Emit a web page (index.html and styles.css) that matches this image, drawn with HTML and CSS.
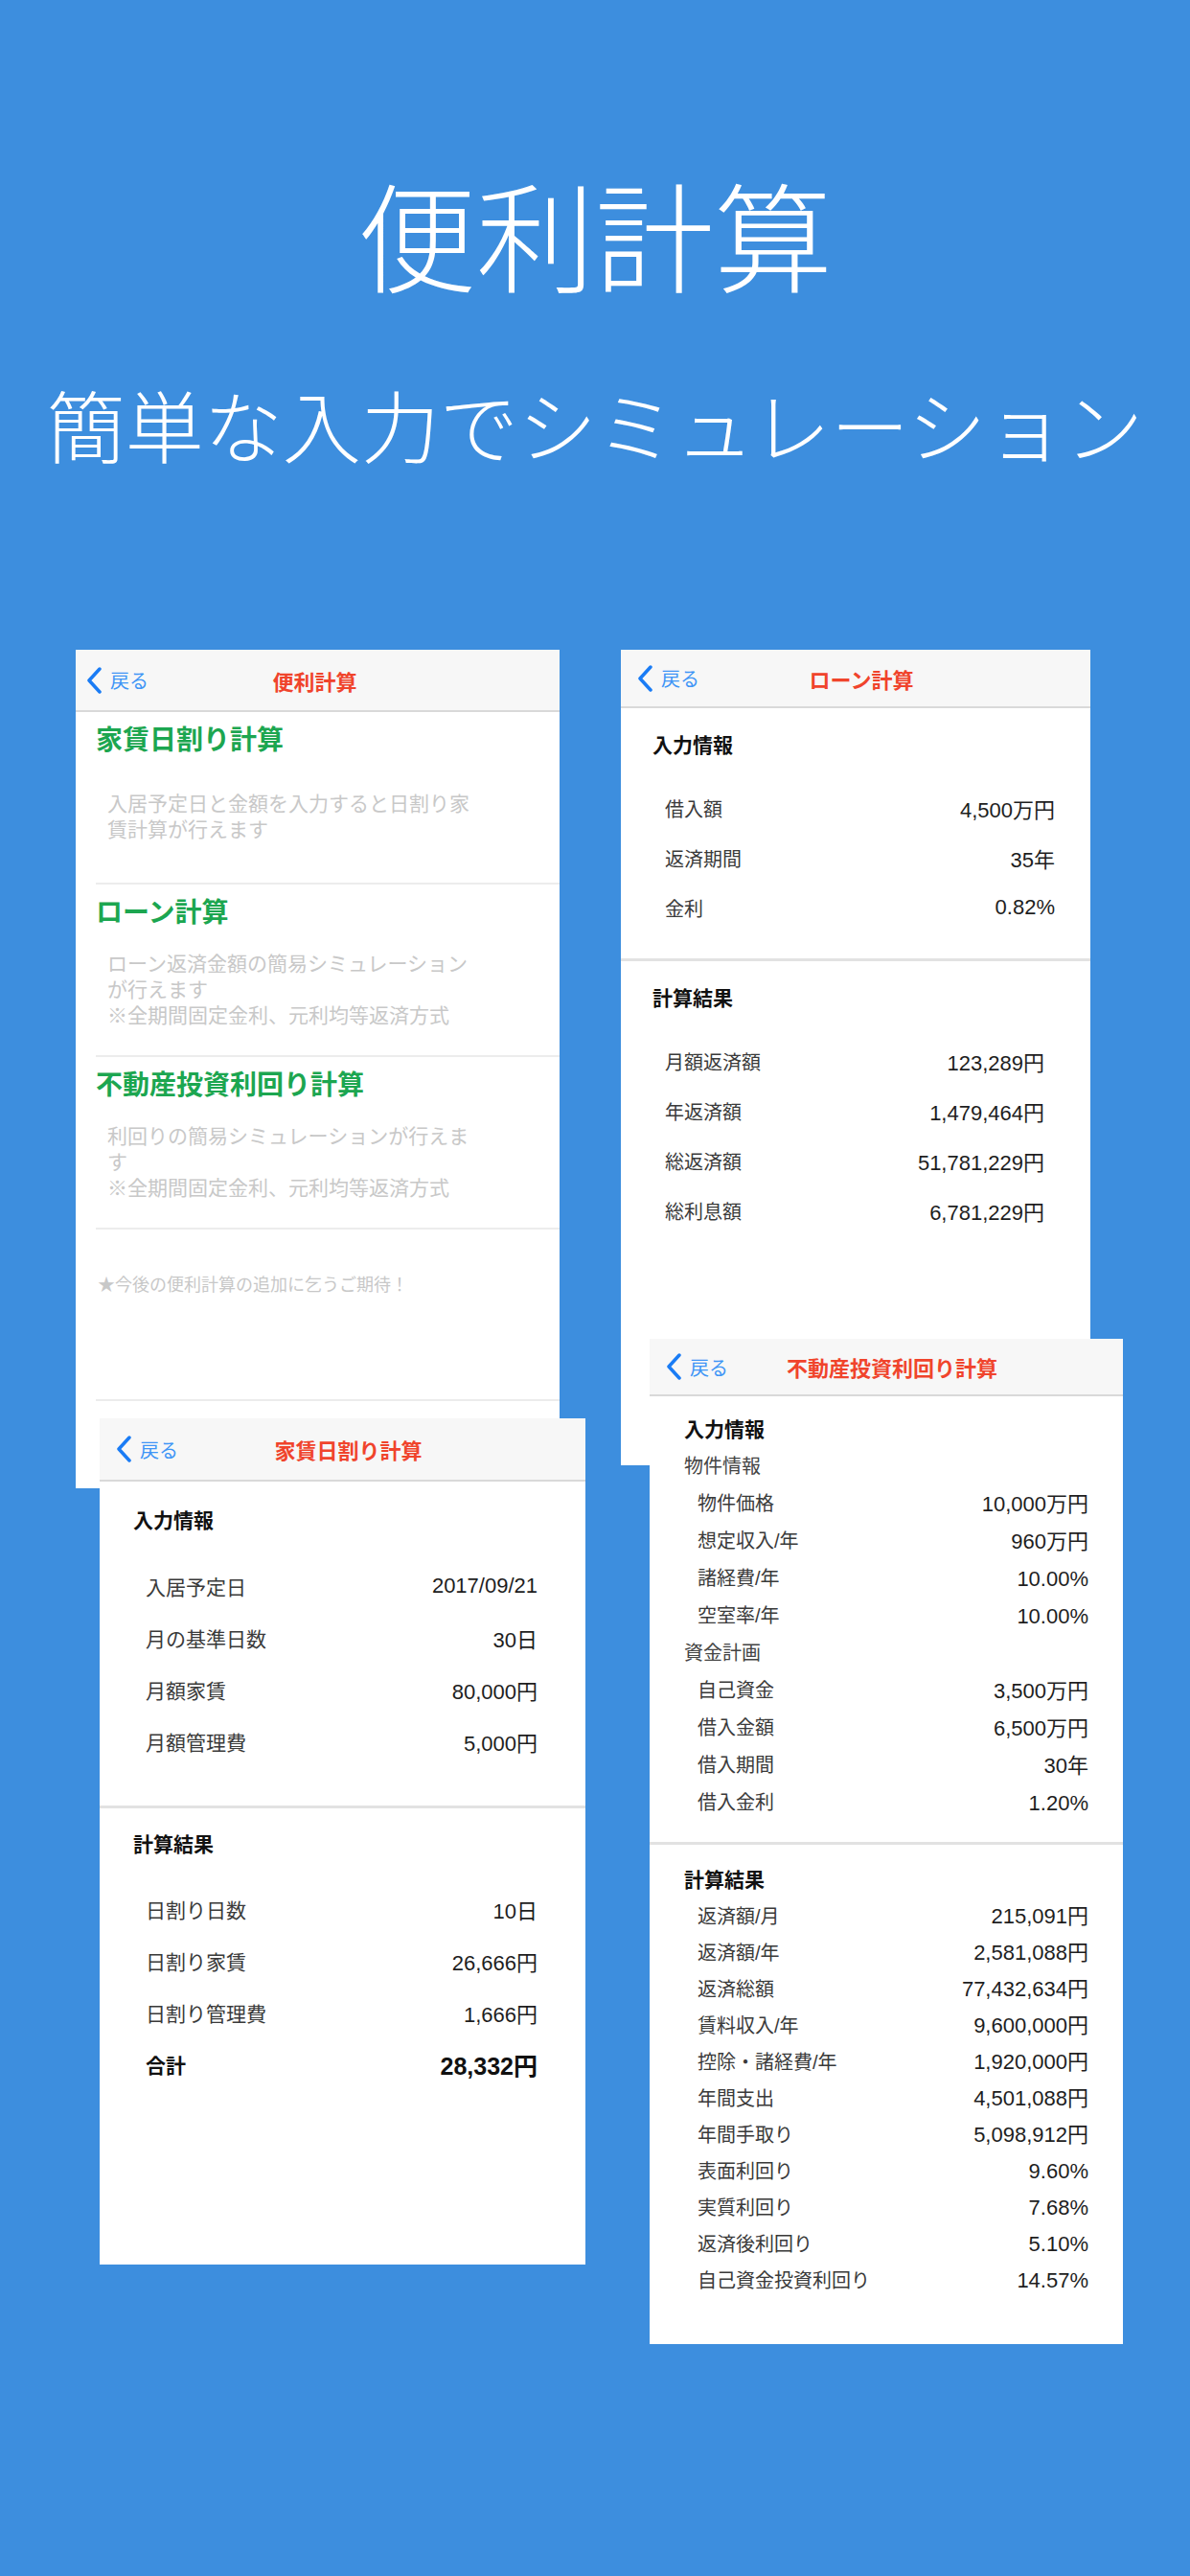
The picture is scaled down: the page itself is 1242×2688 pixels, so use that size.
FILE: index.html
```html
<!DOCTYPE html>
<html lang="ja">
<head>
    <meta charset="UTF-8">
    <meta name="viewport" content="width=device-width, initial-scale=1.0">
    <title>便利計算</title>
    <link rel="stylesheet" href="styles.css">
</head>
<body>

    <div class="hero">
        <h1>便利計算</h1>
        <p>簡単な入力でシミュレーション</p>
    </div>

    <div class="shots">
        <div class="column column-left">

            <!-- Menu screen -->
            <div class="screen screen-menu">
                <div class="navbar">
                    <div class="back">
                        <svg viewBox="0 0 17 28"><polyline points="14,2 3,14 14,26"/></svg>
                        <span>戻る</span>
                    </div>
                    <div class="nav-title">便利計算</div>
                    <div></div>
                </div>

                <div class="menu-item">
                    <h2 class="menu-title">家賃日割り計算</h2>
                    <div class="menu-desc">
                        <p>入居予定日と金額を入力すると日割り家賃計算が行えます</p>
                    </div>
                </div>
                <div class="menu-item">
                    <h2 class="menu-title">ローン計算</h2>
                    <div class="menu-desc">
                        <p>ローン返済金額の簡易シミュレーションが行えます<br>※全期間固定金利、元利均等返済方式</p>
                    </div>
                </div>
                <div class="menu-item">
                    <h2 class="menu-title">不動産投資利回り計算</h2>
                    <div class="menu-desc">
                        <p>利回りの簡易シミュレーションが行えます<br>※全期間固定金利、元利均等返済方式</p>
                    </div>
                </div>
                <div class="menu-note">★今後の便利計算の追加に乞うご期待！</div>
            </div>

            <!-- Rent screen -->
            <div class="screen screen-rent">
                <div class="navbar">
                    <div class="back">
                        <svg viewBox="0 0 17 28"><polyline points="14,2 3,14 14,26"/></svg>
                        <span>戻る</span>
                    </div>
                    <div class="nav-title">家賃日割り計算</div>
                    <div></div>
                </div>

                <div class="section section-input">
                    <h3 class="section-head">入力情報</h3>
                    <div class="rows">
                        <div class="row"><span class="label">入居予定日</span><span class="value">2017/09/21</span></div>
                        <div class="row"><span class="label">月の基準日数</span><span class="value">30日</span></div>
                        <div class="row"><span class="label">月額家賃</span><span class="value">80,000円</span></div>
                        <div class="row"><span class="label">月額管理費</span><span class="value">5,000円</span></div>
                    </div>
                </div>
                <div class="section section-result">
                    <h3 class="section-head">計算結果</h3>
                    <div class="rows">
                        <div class="row"><span class="label">日割り日数</span><span class="value">10日</span></div>
                        <div class="row"><span class="label">日割り家賃</span><span class="value">26,666円</span></div>
                        <div class="row"><span class="label">日割り管理費</span><span class="value">1,666円</span></div>
                        <div class="row row-total"><span class="label">合計</span><span class="value">28,332円</span></div>
                    </div>
                </div>
            </div>
        </div>

        <div class="column column-right">

            <!-- Loan screen -->
            <div class="screen screen-loan">
                <div class="navbar">
                    <div class="back">
                        <svg viewBox="0 0 17 28"><polyline points="14,2 3,14 14,26"/></svg>
                        <span>戻る</span>
                    </div>
                    <div class="nav-title">ローン計算</div>
                    <div></div>
                </div>

                <div class="section section-input">
                    <h3 class="section-head">入力情報</h3>
                    <div class="rows">
                        <div class="row"><span class="label">借入額</span><span class="value">4,500万円</span></div>
                        <div class="row"><span class="label">返済期間</span><span class="value">35年</span></div>
                        <div class="row"><span class="label">金利</span><span class="value">0.82%</span></div>
                    </div>
                </div>
                <div class="section section-result">
                    <h3 class="section-head">計算結果</h3>
                    <div class="rows">
                        <div class="row"><span class="label">月額返済額</span><span class="value">123,289円</span></div>
                        <div class="row"><span class="label">年返済額</span><span class="value">1,479,464円</span></div>
                        <div class="row"><span class="label">総返済額</span><span class="value">51,781,229円</span></div>
                        <div class="row"><span class="label">総利息額</span><span class="value">6,781,229円</span></div>
                    </div>
                </div>
            </div>

            <!-- Yield screen -->
            <div class="screen screen-yield">
                <div class="navbar">
                    <div class="back">
                        <svg viewBox="0 0 17 28"><polyline points="14,2 3,14 14,26"/></svg>
                        <span>戻る</span>
                    </div>
                    <div class="nav-title">不動産投資利回り計算</div>
                    <div></div>
                </div>

                <div class="section section-input">
                    <h3 class="section-head">入力情報</h3>
                    <div class="group-head">物件情報</div>
                    <div class="row"><span class="label">物件価格</span><span class="value">10,000万円</span></div>
                    <div class="row"><span class="label">想定収入/年</span><span class="value">960万円</span></div>
                    <div class="row"><span class="label">諸経費/年</span><span class="value">10.00%</span></div>
                    <div class="row"><span class="label">空室率/年</span><span class="value">10.00%</span></div>
                    <div class="group-head">資金計画</div>
                    <div class="row"><span class="label">自己資金</span><span class="value">3,500万円</span></div>
                    <div class="row"><span class="label">借入金額</span><span class="value">6,500万円</span></div>
                    <div class="row"><span class="label">借入期間</span><span class="value">30年</span></div>
                    <div class="row"><span class="label">借入金利</span><span class="value">1.20%</span></div>
                </div>
                <div class="section section-result">
                    <h3 class="section-head">計算結果</h3>
                    <div class="row"><span class="label">返済額/月</span><span class="value">215,091円</span></div>
                    <div class="row"><span class="label">返済額/年</span><span class="value">2,581,088円</span></div>
                    <div class="row"><span class="label">返済総額</span><span class="value">77,432,634円</span></div>
                    <div class="row"><span class="label">賃料収入/年</span><span class="value">9,600,000円</span></div>
                    <div class="row"><span class="label">控除・諸経費/年</span><span class="value">1,920,000円</span></div>
                    <div class="row"><span class="label">年間支出</span><span class="value">4,501,088円</span></div>
                    <div class="row"><span class="label">年間手取り</span><span class="value">5,098,912円</span></div>
                    <div class="row"><span class="label">表面利回り</span><span class="value">9.60%</span></div>
                    <div class="row"><span class="label">実質利回り</span><span class="value">7.68%</span></div>
                    <div class="row"><span class="label">返済後利回り</span><span class="value">5.10%</span></div>
                    <div class="row"><span class="label">自己資金投資利回り</span><span class="value">14.57%</span></div>
                </div>
            </div>
        </div>
    </div>

</body>
</html>
```

FILE: styles.css
```css
/* General */
body {
    margin: 0;
    min-height: 2688px;
    background-color: #3d8ede;
    font-family: "Liberation Sans", "Noto Sans CJK JP", sans-serif;
    color: #222;
}

/* Hero */
.hero {
    padding-top: 167px;
    text-align: center;
    color: #fff;
    font-family: "Noto Sans CJK JP", sans-serif;
}

.hero h1 {
    margin: 0;
    font-size: 124px;
    font-weight: 300;
    line-height: 150px;
}

.hero p {
    margin: 75px 0 0;
    font-size: 82px;
    font-weight: 300;
    line-height: 100px;
}

/* Screenshot layout */
.shots {
    display: flex;
    gap: 37px;
    margin-top: 186px;
    padding-left: 79px;
}

.column {
    display: flex;
    flex-direction: column;
    align-items: flex-start;
}

.column-left {
    width: 532px;
}

.screen {
    position: relative;
    background: #fff;
    overflow: hidden;
}

.screen-menu {
    width: 505px;
    height: 875px;
}

.screen-rent {
    width: 507px;
    height: 883px;
    margin-top: -73px;
    margin-left: 25px;
}

.screen-loan {
    width: 490px;
    height: 851px;
}

.screen-yield {
    width: 494px;
    height: 1049px;
    margin-top: -132px;
    margin-left: 30px;
}

/* Navigation bar */
.navbar {
    display: grid;
    grid-template-columns: 1fr auto 1fr;
    align-items: center;
    box-sizing: border-box;
    height: 61px;
    padding: 0 17px;
    background: #f7f7f7;
    border-bottom: 2px solid #d9d9d9;
}

.screen-menu .navbar {
    height: 65px;
    padding-left: 11px;
}

.screen-rent .navbar {
    height: 66px;
}

.screen-yield .navbar {
    height: 60px;
}

.back {
    display: flex;
    align-items: center;
    gap: 8px;
    color: #3f95f6;
    font-size: 20px;
}

.back svg {
    width: 17px;
    height: 28px;
}

.back polyline {
    fill: none;
    stroke: #1a7cf5;
    stroke-width: 3.5;
    stroke-linecap: round;
    stroke-linejoin: round;
}

.nav-title {
    padding-left: 12px;
    color: #f0442c;
    font-size: 22px;
    font-weight: bold;
}

.screen-menu .nav-title {
    padding-left: 0;
}

/* Menu list */
.menu-item {
    display: flex;
    flex-direction: column;
    box-sizing: border-box;
    height: 180px;
    margin-left: 21px;
    padding-bottom: 20px;
    border-bottom: 2px solid #ececec;
}

.menu-title {
    margin: 0;
    color: #1ca650;
    font-size: 28px;
    font-weight: bold;
    line-height: 60px;
}

.menu-desc {
    flex: 1;
    display: flex;
    align-items: center;
    padding-left: 12px;
}

.menu-desc p {
    width: 390px;
    margin: 0;
    color: #c8c8c8;
    font-size: 21px;
    line-height: 27px;
}

.menu-note {
    box-sizing: border-box;
    height: 179px;
    margin-left: 21px;
    padding: 47px 0 0 2px;
    border-bottom: 2px solid #ececec;
    color: #c8c8c8;
    font-size: 18px;
    line-height: 22px;
}

/* Result sections */
.section-input {
    border-bottom: 3px solid #e2e2e2;
}

.section-head {
    margin: 0;
    color: #111;
    font-size: 21px;
    font-weight: bold;
    line-height: 30px;
}

.row {
    display: flex;
    justify-content: space-between;
    align-items: center;
}

.row .label {
    color: #3a3a3a;
    font-size: 20px;
}

.row .value {
    color: #1e1e1e;
    font-size: 22px;
}

/* Loan */
.screen-loan .section-input {
    padding: 24px 37px 27px 33px;
}

.screen-loan .section-result {
    padding: 24px 48px 0 33px;
}

.screen-loan .rows {
    margin-top: 24px;
}

.screen-loan .row {
    height: 52px;
    padding-left: 13px;
}

/* Rent */
.screen-rent .section-input {
    padding: 26px 50px 40px 35px;
}

.screen-rent .section-result {
    padding: 23px 50px 0 35px;
}

.screen-rent .section-input .rows {
    margin-top: 26px;
}

.screen-rent .section-result .rows {
    margin-top: 25px;
}

.screen-rent .row {
    height: 54px;
    padding-left: 13px;
}

.screen-rent .row .label {
    font-size: 21px;
}

.row-total .label {
    color: #111;
    font-size: 23px;
    font-weight: bold;
}

.row-total .value {
    color: #111;
    font-size: 25px;
    font-weight: bold;
}

/* Yield */
.screen-yield .section-input {
    padding: 15px 36px 21px 36px;
}

.screen-yield .section-result {
    padding: 18px 36px 0 36px;
}

.screen-yield .section-input .section-head,
.screen-yield .group-head,
.screen-yield .section-input .row {
    height: 39px;
    line-height: 39px;
}

.screen-yield .section-result .section-head,
.screen-yield .section-result .row {
    height: 38px;
    line-height: 38px;
}

.group-head {
    color: #444;
    font-size: 20px;
}

.screen-yield .row {
    padding-left: 14px;
}
```
